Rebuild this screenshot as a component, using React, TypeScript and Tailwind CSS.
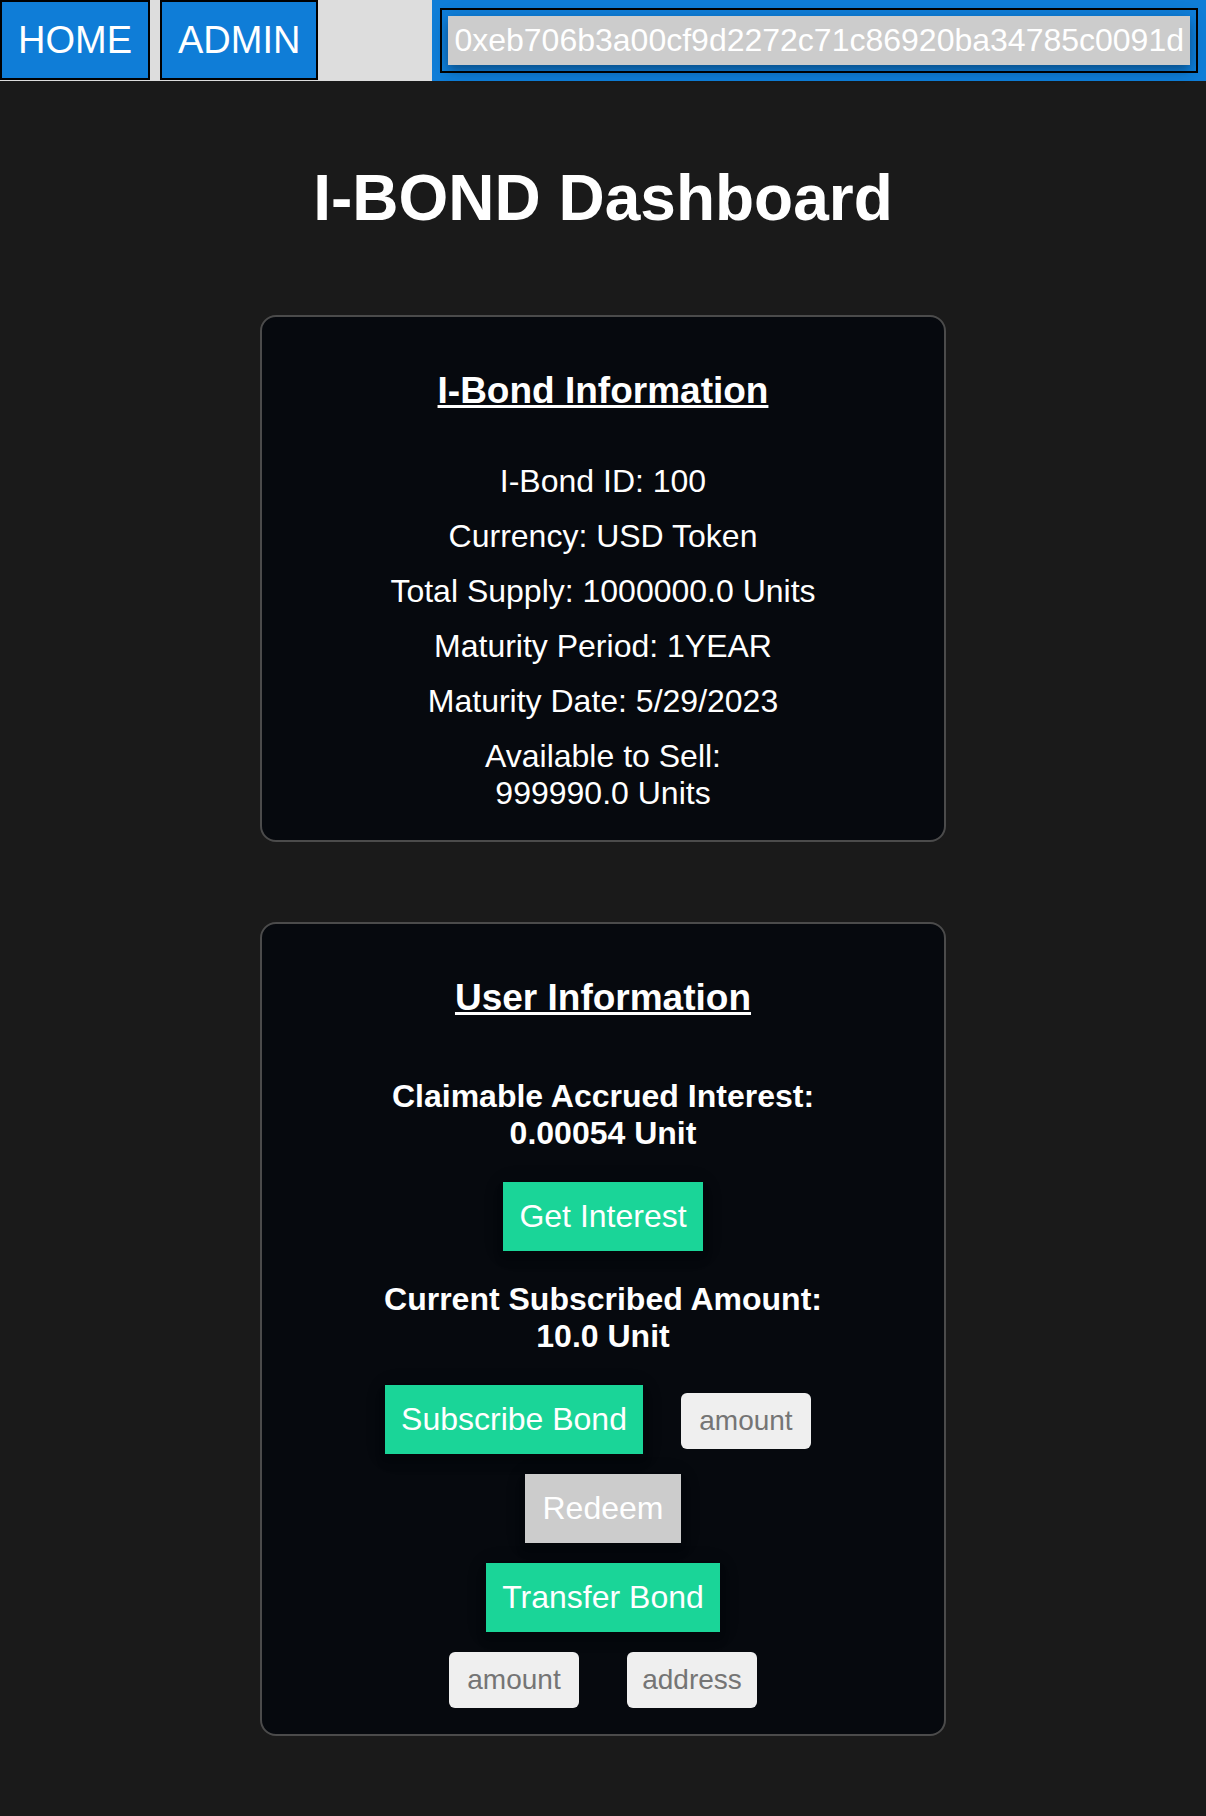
import React, { useState } from "react";

const bondFacts = [
  "I-Bond ID: 100",
  "Currency: USD Token",
  "Total Supply: 1000000.0 Units",
  "Maturity Period: 1YEAR",
  "Maturity Date: 5/29/2023",
];

function NavLink({ href, children }: { href: string; children: React.ReactNode }) {
  return (
    <a
      href={href}
      className="border-2 border-black bg-[#0f7dd7] px-4 py-4 text-[38px] leading-[44px] text-white"
    >
      {children}
    </a>
  );
}

function Card({ id, title, children }: { id: string; title: string; children: React.ReactNode }) {
  return (
    <section
      aria-labelledby={id}
      className="flex w-full max-w-[686px] flex-col items-center rounded-2xl border-2 border-[#4b4b4b] bg-[#06090e] px-4 pt-[52px] pb-[26px] text-center"
    >
      <h2
        id={id}
        className="text-[37px] leading-[44px] font-bold underline decoration-[3px] underline-offset-2"
      >
        {title}
      </h2>
      {children}
    </section>
  );
}

function ActionButton({ disabled = false, children }: { disabled?: boolean; children: React.ReactNode }) {
  return (
    <button
      type="button"
      disabled={disabled}
      className="min-w-[156px] bg-[#1ad598] p-4 leading-[37px] text-white shadow-[0_4px_8px_-2px_rgba(0,0,0,0.2),0_8px_10px_0_rgba(0,0,0,0.14),0_2px_20px_0_rgba(0,0,0,0.12)] disabled:bg-[#cccccc]"
    >
      {children}
    </button>
  );
}

function Field({ name, label }: { name: string; label: string }) {
  const [value, setValue] = useState("");
  return (
    <input
      type="text"
      name={name}
      aria-label={label}
      placeholder={label.split(" ").pop()}
      value={value}
      onChange={(e) => setValue(e.target.value)}
      className="w-[130px] rounded-md bg-[#efefef] px-2 py-3 text-center text-[28px] leading-8 text-black placeholder:text-[#757575]"
    />
  );
}

export default function App() {
  return (
    <div className="min-h-screen bg-[#1a1a1a] font-['Liberation_Sans',Arial,sans-serif] text-[32px] leading-[37px] text-white">
      <nav className="flex items-start bg-[#dddddd]">
        <div className="flex gap-[10px]">
          <NavLink href="#home">HOME</NavLink>
          <NavLink href="#admin">ADMIN</NavLink>
        </div>
        <div className="ml-auto bg-[#0f7dd7] p-2">
          <div className="border-2 border-black p-[6px]">
            <button
              type="button"
              disabled
              className="block bg-[#cccccc] p-[6px] text-white shadow-[0_4px_8px_-2px_rgba(0,0,0,0.2),0_8px_10px_0_rgba(0,0,0,0.14),0_2px_20px_0_rgba(0,0,0,0.12)]"
            >
              0xeb706b3a00cf9d2272c71c86920ba34785c0091d
            </button>
          </div>
        </div>
      </nav>

      <main className="flex flex-col items-center gap-20 py-20">
        <h1 className="text-center text-[64px] leading-[74px] font-bold">I-BOND Dashboard</h1>

        <Card id="bond-info" title="I-Bond Information">
          <ul className="mt-[50px] flex flex-col gap-[18px] pb-[2px]">
            {bondFacts.map((fact) => (
              <li key={fact}>{fact}</li>
            ))}
            <li>
              Available to Sell:
              <br />
              999990.0 Units
            </li>
          </ul>
        </Card>

        <Card id="user-info" title="User Information">
          <div className="mt-[58px] flex flex-col items-center gap-[30px]">
            <p className="font-bold">
              Claimable Accrued Interest:
              <br />
              0.00054 Unit
            </p>
            <ActionButton>Get Interest</ActionButton>
            <p className="font-bold">
              Current Subscribed Amount:
              <br />
              10.0 Unit
            </p>
            <div className="flex flex-col items-center gap-5">
              <div className="flex items-baseline gap-[38px] pr-[10px]">
                <ActionButton>Subscribe Bond</ActionButton>
                <Field name="subscribe-amount" label="Subscribe amount" />
              </div>
              <ActionButton disabled>Redeem</ActionButton>
              <ActionButton>Transfer Bond</ActionButton>
              <div className="flex gap-12">
                <Field name="transfer-amount" label="Transfer amount" />
                <Field name="transfer-address" label="Transfer address" />
              </div>
            </div>
          </div>
        </Card>
      </main>
    </div>
  );
}
